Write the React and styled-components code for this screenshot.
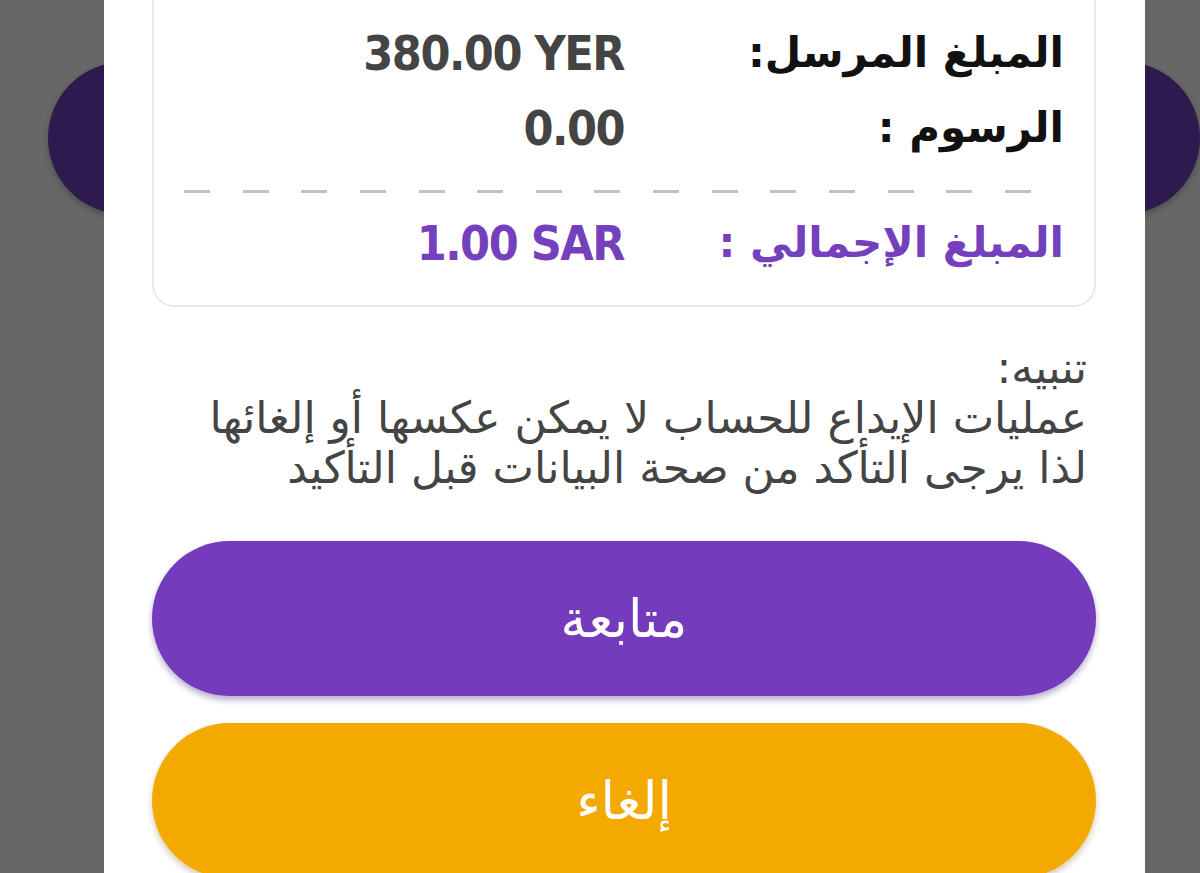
import React from 'react';
import styled, { createGlobalStyle } from 'styled-components';

const GlobalStyle = createGlobalStyle`
  html, body {
    margin: 0;
    padding: 0;
    background: #676767;
    overflow: hidden;
  }
  body {
    font-family: "DejaVu Sans", "Noto Sans", sans-serif;
  }
`;

const rows = [
  { label: 'المبلغ المرسل:', value: '380.00 YER' },
  { label: 'الرسوم :', value: '0.00' },
];

const App = () => {
  return (
    <>
      <GlobalStyle />
      <Screen>
        <Bubble $left={48} />
        <Bubble $left={1048} />
        <Modal dir="rtl">
          <Summary>
            {rows.map((r) => (
              <Row key={r.label}>
                <Label>{r.label}</Label>
                <Value>{r.value}</Value>
              </Row>
            ))}
            <Dashes />
            <Row>
              <Label $accent>المبلغ الإجمالي :</Label>
              <Value $accent>1.00 SAR</Value>
            </Row>
          </Summary>
          <Notice>
            تنبيه:
            <br />
            عمليات الإيداع للحساب لا يمكن عكسها أو إلغائها
            <br />
            لذا يرجى التأكد من صحة البيانات قبل التأكيد
          </Notice>
          <Actions>
            <PillButton $bg="#743cbc" $shadow="rgba(60, 20, 110, 0.35)">متابعة</PillButton>
            <PillButton $bg="#f4a900" $shadow="rgba(120, 80, 0, 0.3)">إلغاء</PillButton>
          </Actions>
        </Modal>
      </Screen>
    </>
  );
};

const Screen = styled.div`
  position: relative;
  height: 873px;
  overflow: hidden;
  display: flex;
`;

// dimmed circles of the screen under the overlay
const Bubble = styled.div`
  position: absolute;
  top: 62px;
  left: ${(p) => p.$left}px;
  width: 152px;
  height: 152px;
  border-radius: 50%;
  background: #2e1a4f;
  box-shadow: 0 3px 6px rgba(0, 0, 0, 0.25);
`;

const Modal = styled.div`
  position: relative;
  z-index: 1;
  width: 1041px;
  margin-left: 104px;
  box-sizing: border-box;
  background: #fff;
  padding: 0 49px 0 48px;
  display: flex;
  flex-direction: column;
`;

const Summary = styled.div`
  margin-top: -40px;
  border: 2px solid #e8e8e8;
  border-radius: 22px;
  padding: 53px 30px 25px;
`;

const Row = styled.div`
  display: grid;
  grid-template-columns: 1fr 1fr;
  height: 75px;
  align-items: center;
`;

const Label = styled.div`
  font-family: "DejaVu Sans", sans-serif;
  font-weight: 700;
  font-size: 42px;
  color: ${(p) => (p.$accent ? '#7440bc' : '#111')};
  text-align: right;
  white-space: nowrap;
`;

const Value = styled.div`
  font-family: "DejaVu Sans Condensed", "DejaVu Sans", sans-serif;
  font-weight: 700;
  font-size: 48px;
  letter-spacing: -1.5px;
  color: ${(p) => (p.$accent ? '#7440bc' : '#444')};
  direction: ltr;
  justify-self: start;
  white-space: nowrap;
`;

const Dashes = styled.div`
  height: 3px;
  margin: 25px 2px 12px 0;
  background: repeating-linear-gradient(
    to right,
    #c2c2c2 0,
    #c2c2c2 26px,
    transparent 26px,
    transparent 58.64px
  );
`;

const Notice = styled.p`
  margin: 36px 9px 0 0;
  font-size: 44px;
  line-height: 50px;
  color: #444;
  text-align: right;
  white-space: nowrap;
`;

const Actions = styled.div`
  display: flex;
  flex-direction: column;
  gap: 27px;
  margin-top: 48px;
`;

const PillButton = styled.button`
  height: 155px;
  border: none;
  border-radius: 78px;
  background: ${(p) => p.$bg};
  box-shadow: 0 4px 6px ${(p) => p.$shadow};
  color: #fff;
  font-family: "DejaVu Sans", sans-serif;
  font-size: 52px;
  padding: 0;
  cursor: pointer;
`;

export default App;
